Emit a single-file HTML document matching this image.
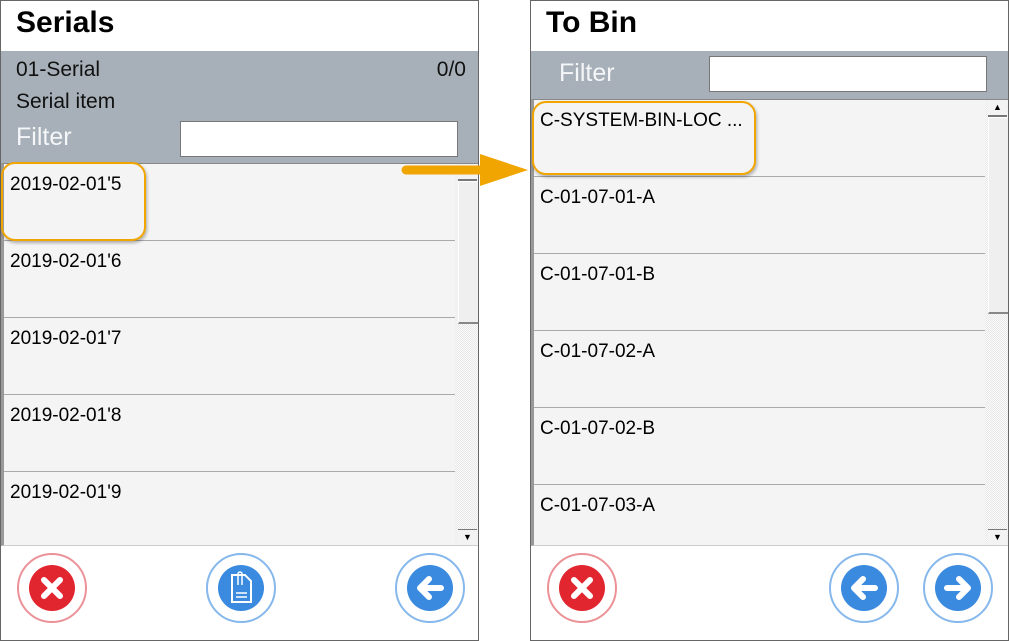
<!DOCTYPE html><html><head><style>
body{margin:0;width:1009px;height:641px;background:#fff;position:relative;overflow:hidden;font-family:"Liberation Sans",sans-serif}
.p{position:absolute;top:0;width:477px;height:639px;border:1px solid #666;background:#fff;box-sizing:content-box}
.t{position:absolute;left:15px;top:5px;font-size:30px;font-weight:bold;color:#000}
.g{position:absolute;left:0;right:0;top:50px;background:#a7b0b8}
.lbl{position:absolute;font-size:21px;color:#111}
.fl{position:absolute;font-size:25px;color:#f4f6f8}
.in{position:absolute;background:#fff;border:1px solid #777;height:34px}
.list{position:absolute;left:0;right:0;background:#f4f4f4;border-left:3px solid #999;border-top:1px solid #888;border-bottom:1px solid #ccc;overflow:hidden}
.row{border-bottom:1px solid #aaa;font-size:19px;padding:10px 0 0 6px;box-sizing:border-box;height:77px;width:calc(100% - 23px)}
.sb{position:absolute;right:0;top:0;bottom:0;width:23px;background:repeating-conic-gradient(#e8e8e8 0 25%,#fafafa 0 50%) 0 0/2px 2px}
.btn{position:absolute;width:15px;height:15px;left:3px;background:#f3f3f3;border-bottom:2px solid #777;font-size:9px;text-align:center;line-height:15px}
.th{position:absolute;left:3px;width:19px;background:#efefef;border:1px solid #fff;border-bottom:2px solid #888}
.hl{position:absolute;border:2.5px solid #f0a500;border-radius:14px;box-shadow:1px 2px 3px rgba(0,0,0,.3)}
.c{position:absolute;width:70px;height:70px;border-radius:50%;border:2px solid;box-sizing:border-box}
.c svg{position:absolute;left:10px;top:10px}
</style></head><body>
<div class="p" style="left:0">
<div class="t">Serials</div>
<div class="g" style="height:112px">
<div class="lbl" style="left:15px;top:7px">01-Serial</div>
<div class="lbl" style="right:12px;top:7px">0/0</div>
<div class="lbl" style="left:15px;top:39px">Serial item</div>
<div class="fl" style="left:15px;top:72px">Filter</div>
<div class="in" style="left:179px;top:70px;width:276px"></div>
</div>
<div class="list" style="top:162px;height:381px">
<div class="row">2019-02-01'5</div><div class="row">2019-02-01'6</div><div class="row">2019-02-01'7</div><div class="row">2019-02-01'8</div><div class="row">2019-02-01'9</div>
<div class="sb"><div class="btn" style="top:0;width:19px">▲</div><div class="th" style="top:17px;height:140px"></div><div class="btn" style="bottom:0;width:19px;border-bottom:none;border-top:1px solid #777">▼</div></div>
</div>
</div>
<div class="p" style="left:530px">
<div class="t">To Bin</div>
<div class="g" style="height:48px">
<div class="fl" style="left:28px;top:8px">Filter</div>
<div class="in" style="left:178px;top:5px;width:276px"></div>
</div>
<div class="list" style="top:98px;height:445px">
<div class="row">C-SYSTEM-BIN-LOC ...</div><div class="row">C-01-07-01-A</div><div class="row">C-01-07-01-B</div><div class="row">C-01-07-02-A</div><div class="row">C-01-07-02-B</div><div class="row">C-01-07-03-A</div>
<div class="sb"><div class="btn" style="top:0;width:19px">▲</div><div class="th" style="top:17px;height:194px"></div><div class="btn" style="bottom:0;width:19px;border-bottom:none;border-top:1px solid #777">▼</div></div>
</div>
</div>
<div class="hl" style="left:1px;top:162px;width:141px;height:75px"></div>
<div class="hl" style="left:532px;top:101px;width:220px;height:70px"></div>
<svg style="position:absolute;left:400px;top:150px" width="130" height="42"><path d="M6 20H84" stroke="#f0a500" stroke-width="9" stroke-linecap="round"/><path d="M80 4L128 20L80 36Z" fill="#f0a500"/></svg>
<div class="c" style="left:17px;top:553px;border-color:#ec9297"><svg width="46" height="46"><circle cx="23" cy="23" r="23" fill="#e2262f"/><path d="M15 15L31 31M31 15L15 31" stroke="#fff" stroke-width="6" stroke-linecap="round"/></svg></div>
<div class="c" style="left:206px;top:553px;border-color:#86b8ec"><svg width="46" height="46"><circle cx="23" cy="23" r="23" fill="#3a8ae0"/><path d="M14 10H27L33 16V37H14Z" fill="none" stroke="#fff" stroke-width="2"/><path d="M18 28H29M18 32H29" stroke="#fff" stroke-width="1.5"/><path d="M20 20V9a2 2 0 0 1 4 0V20" fill="none" stroke="#fff" stroke-width="1.5"/></svg></div>
<div class="c" style="left:395px;top:553px;border-color:#86b8ec"><svg width="46" height="46"><circle cx="23" cy="23" r="23" fill="#3a8ae0"/><path d="M34 23H13M22 14L13 23L22 32" fill="none" stroke="#fff" stroke-width="6" stroke-linecap="round" stroke-linejoin="round"/></svg></div>
<div class="c" style="left:547px;top:553px;border-color:#ec9297"><svg width="46" height="46"><circle cx="23" cy="23" r="23" fill="#e2262f"/><path d="M15 15L31 31M31 15L15 31" stroke="#fff" stroke-width="6" stroke-linecap="round"/></svg></div>
<div class="c" style="left:829px;top:553px;border-color:#86b8ec"><svg width="46" height="46"><circle cx="23" cy="23" r="23" fill="#3a8ae0"/><path d="M34 23H13M22 14L13 23L22 32" fill="none" stroke="#fff" stroke-width="6" stroke-linecap="round" stroke-linejoin="round"/></svg></div>
<div class="c" style="left:923px;top:553px;border-color:#86b8ec"><svg width="46" height="46"><circle cx="23" cy="23" r="23" fill="#3a8ae0"/><path d="M12 23H33M24 14L33 23L24 32" fill="none" stroke="#fff" stroke-width="6" stroke-linecap="round" stroke-linejoin="round"/></svg></div>
</body></html>
